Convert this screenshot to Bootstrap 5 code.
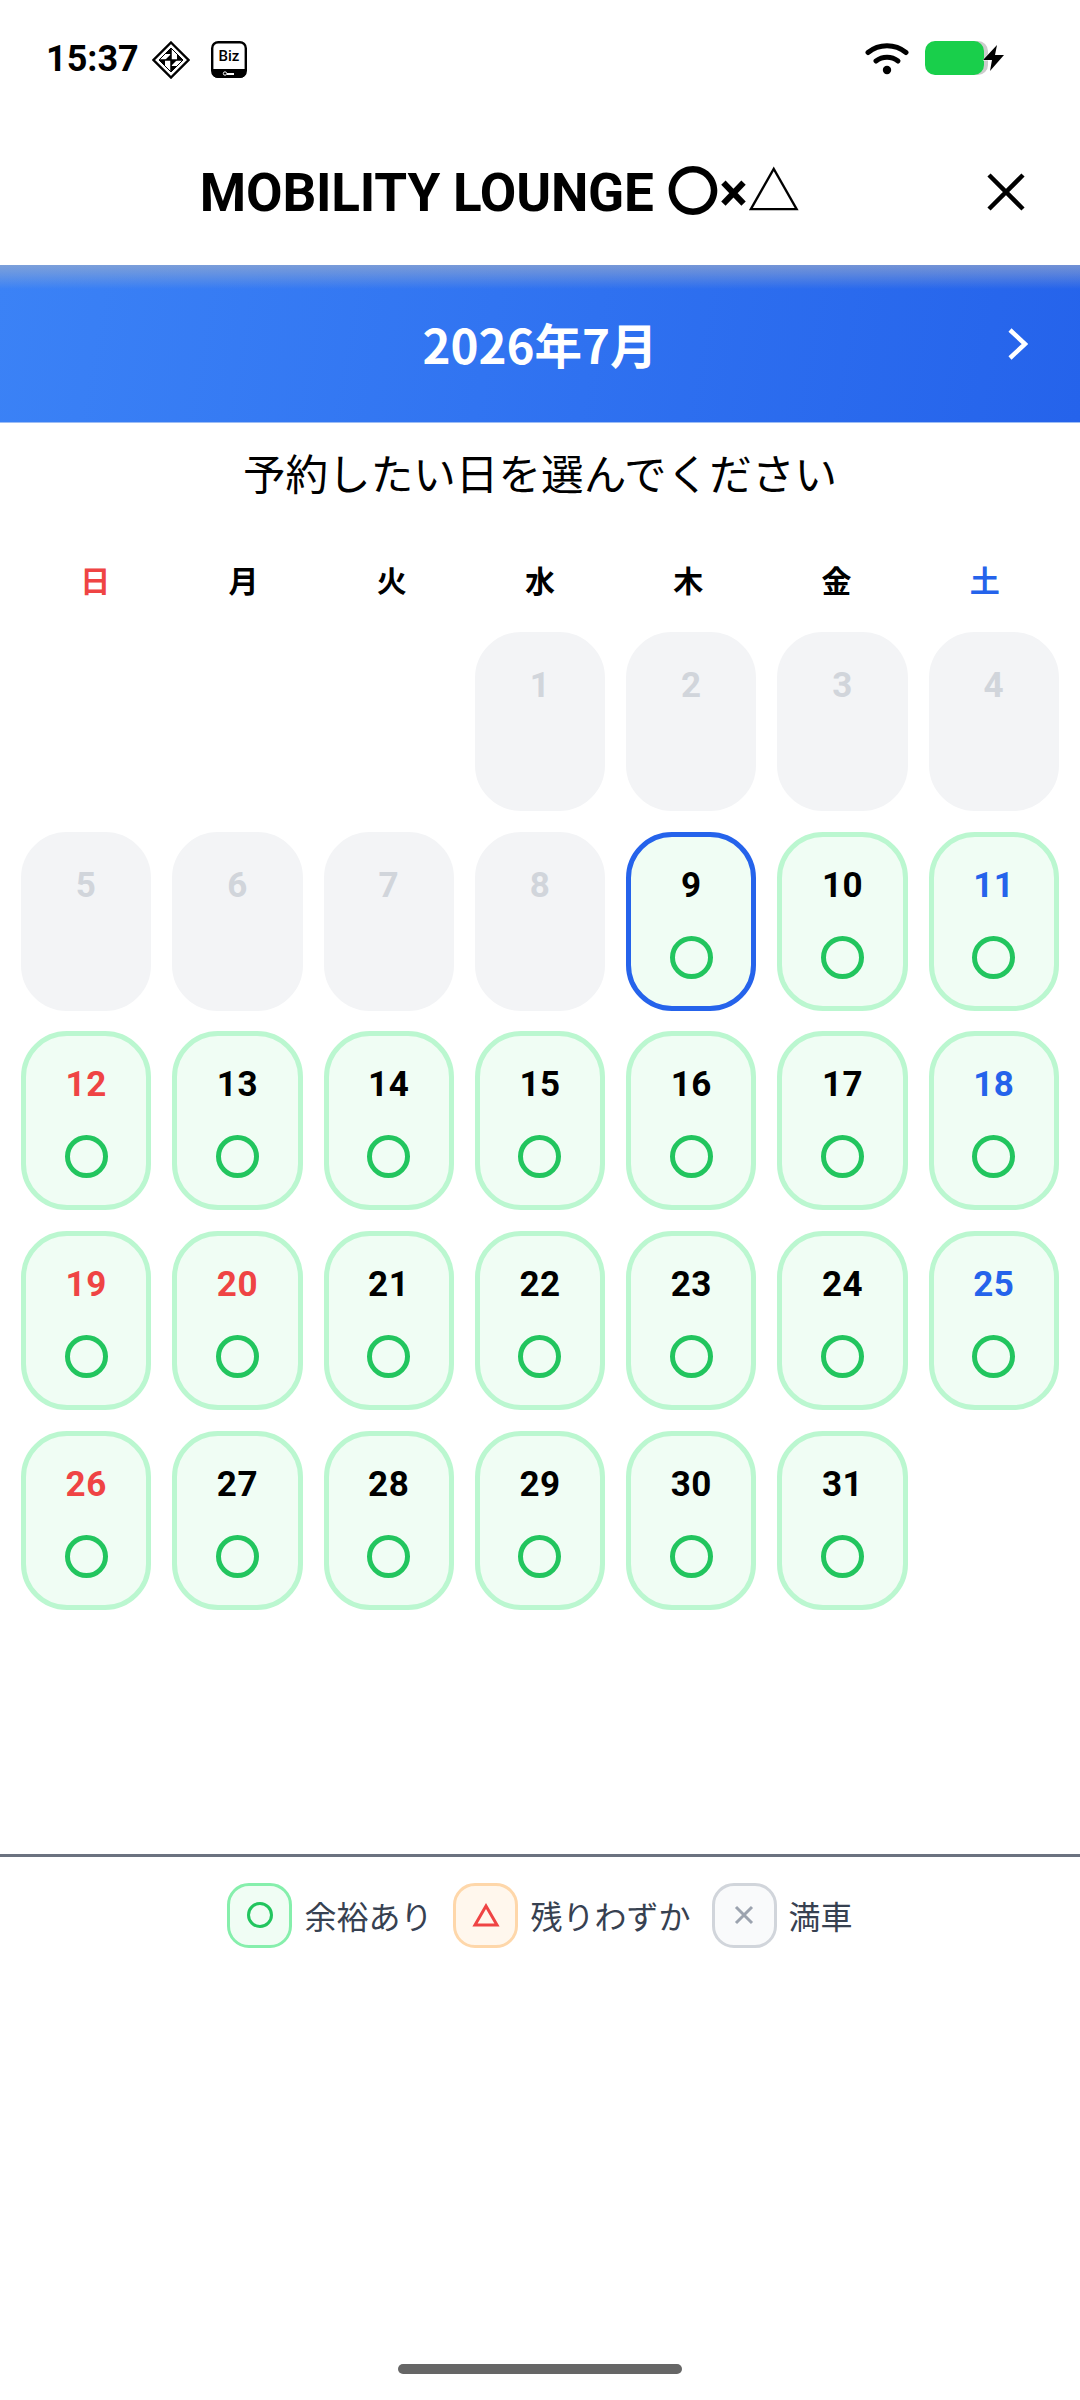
<!DOCTYPE html>
<html lang="ja">
<head>
  <meta charset="UTF-8">
  <meta name="viewport" content="width=device-width, initial-scale=1.0">
  <title>MOBILITY LOUNGE</title>
  <link rel="stylesheet" href="https://cdn.jsdelivr.net/npm/bootstrap@5.3.0/dist/css/bootstrap.min.css">
  <style>
    body {
      width: 1080px;
      min-height: 2400px;
      font-family: "Noto Sans", "Noto Sans CJK JP", sans-serif;
      background: #fff;
      color: #000;
    }

    /* Status bar */
    .status-bar { height: 120px; padding: 41px 74px 0 46px; align-items: flex-start; }
    .status-time { font: 700 36px/37px Roboto, sans-serif; width: 106px; }
    .status-diamond { margin-right: 21px; }
    .status-wifi { margin-right: 16px; }
    .battery-fill { width: 59px; height: 34px; background: #19cf4b; border-radius: 10px; box-shadow: 4px 0 0 #ccc; }
    .battery-bolt { margin-left: -3px; }

    /* Title row */
    .title-row { height: 145px; position: relative; }
    .title-text { font: 700 53px/64px Roboto, "Noto Sans CJK JP", sans-serif; margin-right: 80px; letter-spacing: -.2px; }
    .title-close { position: absolute; right: 55px; top: 53px; }

    /* Month band */
    .month-band {
      height: 158px;
      position: relative;
      border-bottom: 1px solid #9dbdf5;
      background:
        linear-gradient(180deg, rgba(190, 190, 190, .5) 0, rgba(190, 190, 190, .35) 8px, rgba(190, 190, 190, 0) 24px),
        linear-gradient(100deg, #3b82f6, #2563eb);
    }
    .month-text { font: 700 47.500px/60px "Noto Sans CJK JP", sans-serif; color: #fff; }
    .month-next { position: absolute; right: 52px; top: 63px; }

    .lead-text { font: 400 42.600px/60px "Noto Sans CJK JP", sans-serif; text-align: center; margin: 19px 0 0; }

    /* Calendar */
    .week-grid { display: grid; grid-template-columns: repeat(7, 1fr); padding: 0 21px; margin-top: 54px; margin-bottom: 30px; }
    .week-name { font: 700 30px/46px "Noto Sans CJK JP", sans-serif; text-align: center; }
    .day-grid { display: grid; grid-template-columns: repeat(7, 1fr); grid-auto-rows: 179px; column-gap: 21px; row-gap: 20.700px; padding: 0 21px; }
    .day-cell { border: 5px solid #bbf7d0; background: #f0fdf4; border-radius: 46px; padding-top: 28px; }
    .day-num { font: 700 35px/42px Roboto, sans-serif; letter-spacing: .5px; }
    .day-mark { width: 43px; height: 43px; border: 5px solid #22c55e; border-radius: 50%; margin-top: 29px; }
    .day-cell.is-off { border-color: #f3f4f6; background: #f3f4f6; }
    .day-cell.is-off .day-num { color: #d1d5db; }
    .day-cell.is-picked { border-color: #2563eb; }
    .tone-sun { color: #ef4444; }
    .tone-sat { color: #2563eb; }

    /* Legend */
    .legend-line { height: 3px; background: #6b7280; margin-top: 244px; }
    .legend-row { margin-top: 26px; }
    .legend-box { width: 65px; height: 65px; border-radius: 22px; border: 3px solid; }
    .legend-ok { border-color: #86efac; background: #f0fdf4; }
    .legend-few { border-color: #fed7aa; background: #fff7ed; }
    .legend-full { border-color: #d1d5db; background: #f9fafb; }
    .legend-text { font: 400 32px/44px "Noto Sans CJK JP", sans-serif; color: #374151; margin: 0 21px 0 12px; }
    .legend-text:last-child { margin-right: 0; }

    .home-bar { width: 284px; height: 10px; background: #666; border-radius: 5px; margin: auto auto 26px; }
  </style>
</head>

<body class="d-flex flex-column">

<!-- Status bar -->
<div class="status-bar d-flex">
  <div class="status-time">15:37</div>
  <svg width="38" height="38" viewBox="0 0 38 38" class="status-diamond">
    <path d="M19 1.500 36.500 19 19 36.500 1.500 19Z" fill="none" stroke="#000" stroke-width="2.400"/>
    <path d="M19 7v12H7ZM19 19h12L19 7ZM31 19 19 31V19ZM7 19h12v12Z" fill="#fff" stroke="#000" stroke-width="1"/>
    <path d="M19 7v6h-6ZM25 19h6l-6-6ZM19 31v-6h6ZM7 19h6v6Z" fill="#000"/>
    <path d="M13 19h6v-6ZM25 19h-6v6Z" fill="#000"/>
  </svg>
  <svg width="36" height="37" viewBox="0 0 36 37">
    <rect x="1.200" y="1.200" width="33.600" height="34.600" rx="6" fill="#fff" stroke="#000" stroke-width="2.400"/>
    <path d="M1 28h34v3a6 6 0 0 1-6 6H7a6 6 0 0 1-6-6Z" fill="#000"/>
    <text x="18" y="20" font-family="Roboto" font-size="15" font-weight="500" text-anchor="middle">Biz</text>
    <circle cx="14" cy="32.500" r="1.700" fill="none" stroke="#fff"/>
    <path d="M16 32h7v2h-7Z" fill="#fff"/>
  </svg>
  <div class="ms-auto d-flex align-items-center">
    <svg width="44" height="34" viewBox="0 0 44 34" class="status-wifi">
      <path d="M3 11.500C14 2.500 30 2.500 41 11.500" fill="none" stroke="#000" stroke-width="5" stroke-linecap="round"/>
      <path d="M11 20c6.500-5 15.500-5 22 0" fill="none" stroke="#000" stroke-width="5" stroke-linecap="round"/>
      <circle cx="22" cy="29" r="4.200"/>
    </svg>
    <div class="battery-fill"></div>
    <svg class="battery-bolt" width="25" height="28" viewBox="0 0 25 28">
      <path d="M16 1 2 16h9l-2 11L23 11h-9Z" stroke="#fff" stroke-width="1" paint-order="stroke"/>
    </svg>
  </div>
</div>

<!-- Title -->
<div class="title-row d-flex align-items-center justify-content-center">
  <div class="title-text">MOBILITY LOUNGE 〇×△</div>
  <svg class="title-close" width="38" height="38" viewBox="0 0 38 38">
    <path d="M2 2 36 36M36 2 2 36" stroke="#000" stroke-width="4.500"/>
  </svg>
</div>

<!-- Month band -->
<div class="month-band d-flex align-items-center justify-content-center">
  <div class="month-text">2026年7月</div>
  <svg class="month-next" width="21" height="32" viewBox="0 0 21 32">
    <path d="M3 2 18 16 3 30" fill="none" stroke="#fff" stroke-width="4.500"/>
  </svg>
</div>

<p class="lead-text">予約したい日を選んでください</p>

<!-- Calendar -->
<div class="week-grid">
  <div class="week-name tone-sun">日</div>
  <div class="week-name">月</div>
  <div class="week-name">火</div>
  <div class="week-name">水</div>
  <div class="week-name">木</div>
  <div class="week-name">金</div>
  <div class="week-name tone-sat">土</div>
</div>
<div class="day-grid" id="dayGrid"></div>

<!-- Legend -->
<div class="legend-line"></div>
<div class="legend-row d-flex justify-content-center align-items-center">
  <div class="legend-box legend-ok d-flex align-items-center justify-content-center">
    <svg width="28" height="28" viewBox="0 0 28 28"><circle cx="14" cy="14" r="11.500" fill="none" stroke="#22c55e" stroke-width="3"/></svg>
  </div>
  <span class="legend-text">余裕あり</span>
  <div class="legend-box legend-few d-flex align-items-center justify-content-center">
    <svg width="28" height="26" viewBox="0 0 28 26"><path d="M14 4 25 23H3Z" fill="none" stroke="#ef4444" stroke-width="3"/></svg>
  </div>
  <span class="legend-text">残りわずか</span>
  <div class="legend-box legend-full d-flex align-items-center justify-content-center">
    <svg width="22" height="22" viewBox="0 0 22 22"><path d="M3 3 19 19M19 3 3 19" stroke="#9ca3af" stroke-width="3"/></svg>
  </div>
  <span class="legend-text">満車</span>
</div>

<div class="home-bar"></div>

<script>
  // Building the July 2026 calendar (the 1st is a Wednesday)
  const dayGrid = document.getElementById('dayGrid');
  let html = '<div></div><div></div><div></div>';

  for (let day = 1; day <= 31; day++) {
    const weekday = (day + 2) % 7;
    let tone = '';
    if (day > 8 && (weekday === 0 || day === 20)) tone = 'tone-sun';
    if (day > 8 && weekday === 6) tone = 'tone-sat';

    let state = '';
    if (day < 9) state = 'is-off';
    if (day === 9) state = 'is-picked';

    html += `<div class="day-cell ${state} d-flex flex-column align-items-center">
      <div class="day-num ${tone}">${day}</div>
      ${day < 9 ? '' : '<div class="day-mark"></div>'}
    </div>`;
  }
  dayGrid.innerHTML = html;
</script>

<script src="https://cdn.jsdelivr.net/npm/bootstrap@5.3.0/dist/js/bootstrap.bundle.min.js"></script>
</body>
</html>
